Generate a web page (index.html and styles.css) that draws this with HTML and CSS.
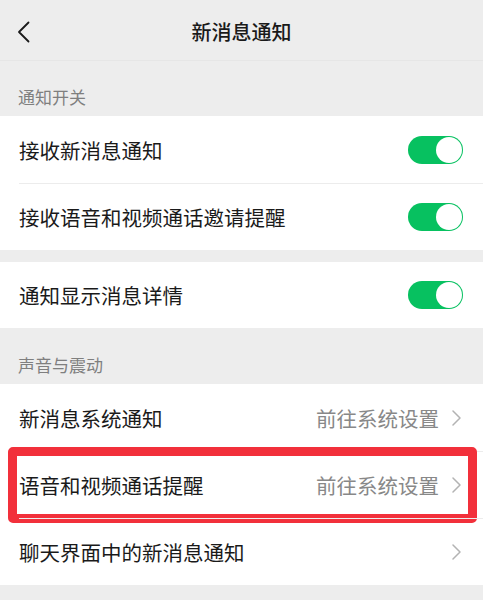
FILE: index.html
```html
<!DOCTYPE html>
<html lang="zh-CN">
<head>
<meta charset="utf-8">
<title>新消息通知</title>
<link rel="stylesheet" href="styles.css">
</head>
<body>
<header class="nav">
  <svg class="back" width="13" height="22" viewBox="0 0 13 22"><path d="M11.5 1.5 L2 11 L11.5 20.5" fill="none" stroke="#1a1a1a" stroke-width="1.8" stroke-linecap="round" stroke-linejoin="round"/></svg>
  <h1 class="title">新消息通知</h1>
</header>

<div class="label">通知开关</div>
<section class="group">
  <div class="row"><span class="text">接收新消息通知</span><span class="switch"><span class="knob"></span></span></div>
  <div class="row"><span class="text">接收语音和视频通话邀请提醒</span><span class="switch"><span class="knob"></span></span></div>
</section>
<section class="group gap">
  <div class="row short"><span class="text">通知显示消息详情</span><span class="switch"><span class="knob"></span></span></div>
</section>

<div class="label">声音与震动</div>
<section class="group">
  <div class="row"><span class="text">新消息系统通知</span><span class="extra">前往系统设置</span><svg class="chev" width="9" height="16" viewBox="0 0 9 16"><path d="M1 1 L8 8 L1 15" fill="none" stroke="#b3b3b3" stroke-width="1.5" stroke-linecap="round" stroke-linejoin="round"/></svg></div>
  <div class="row marked"><span class="text">语音和视频通话提醒</span><span class="extra">前往系统设置</span><svg class="chev" width="9" height="16" viewBox="0 0 9 16"><path d="M1 1 L8 8 L1 15" fill="none" stroke="#b3b3b3" stroke-width="1.5" stroke-linecap="round" stroke-linejoin="round"/></svg></div>
  <div class="row"><span class="text">聊天界面中的新消息通知</span><svg class="chev" width="9" height="16" viewBox="0 0 9 16"><path d="M1 1 L8 8 L1 15" fill="none" stroke="#b3b3b3" stroke-width="1.5" stroke-linecap="round" stroke-linejoin="round"/></svg></div>
</section>
</body>
</html>
```

FILE: styles.css
```css
* { box-sizing: border-box; }
html, body {
  margin: 0;
  padding: 0;
  background: #ededed;
  font-family: "Noto Sans CJK SC", "Noto Sans", sans-serif;
  color: #1a1a1a;
}
.nav {
  height: 61px;
  display: flex;
  align-items: center;
  justify-content: center;
  position: relative;
  border-bottom: 1px solid #e6e6e6;
}
.back {
  position: absolute;
  left: 17px;
  top: 21px;
}
.title {
  margin: 0;
  font-size: 20px;
  font-weight: 500;
  line-height: 28px;
  margin-top: 4px;
}
.label {
  height: 55px;
  display: flex;
  align-items: flex-end;
  padding: 0 0 7px 18px;
  font-size: 17px;
  line-height: 24px;
  color: #7f7f7f;
}
.group + .label { height: 56px; }
.group {
  background: #fff;
}
.group.gap {
  margin-top: 12px;
}
.row {
  height: 67px;
  display: flex;
  align-items: center;
  padding: 0 20px 0 19px;
  position: relative;
  font-size: 20.5px;
}
.row.short { height: 66px; }
.row + .row::before {
  content: "";
  position: absolute;
  top: 0;
  left: 19px;
  right: 0;
  border-top: 1px solid #ececec;
}
.text { flex: 1; }
.extra {
  color: #888;
  margin-right: 13px;
}
.chev { margin-right: 2px; }
.switch {
  width: 55px;
  height: 28px;
  border-radius: 14px;
  background: #07c160;
  display: flex;
  align-items: center;
  justify-content: flex-end;
  padding-right: 1px;
}
.knob {
  width: 26px;
  height: 26px;
  border-radius: 50%;
  background: #fff;
}
.marked::after {
  content: "";
  position: absolute;
  top: -4px;
  bottom: -5px;
  left: 8px;
  right: 6px;
  border: 9px solid #f2303b;
  border-radius: 5px;
}
```
